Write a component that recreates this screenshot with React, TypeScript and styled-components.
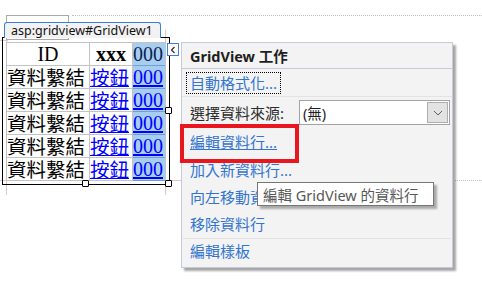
import styled, { createGlobalStyle } from "styled-components";

const GlobalStyle = createGlobalStyle`
  html, body {
    margin: 0;
    padding: 0;
    background: #ffffff;
  }
  body {
    font-family: "Noto Sans", "Noto Sans CJK TC", sans-serif;
  }
`;

const Canvas = styled.div`
  position: relative;
  width: 482px;
  height: 282px;
  overflow: hidden;
  padding-top: 37px;
  box-sizing: border-box;
  background: #ffffff;
`;

const TopGuide = styled.div`
  position: absolute;
  top: 15px;
  left: 6px;
  right: 0;
  display: flex;
  align-items: flex-start;
`;

const Placeholder = styled.div`
  width: 61px;
  height: 23px;
  border: 1px solid #a9a9a9;
  background: #ffffff;
`;

const DottedLine = styled.div`
  flex: 1;
  margin-left: 3px;
  border-top: 1px dotted #bdbdbd;
`;

const Guide = styled.div<{ $vertical?: boolean }>`
  position: absolute;
  background: #e2c6cc;
  ${(p) => (p.$vertical ? "width: 1px;" : "height: 1px;")}
`;

const GuideDots = styled.div`
  position: absolute;
  height: 0;
  border-top: 1px dotted #c4c4c4;
`;

const Stage = styled.div`
  position: relative;
  display: flex;
  align-items: flex-start;
  padding-left: 2px;
  gap: 11px;
`;

const ControlArea = styled.div`
  position: relative;
  width: 168px;
  border: 1px solid #000000;
  padding: 4px 3px 3px 3px;
  box-sizing: border-box;
`;

const Tab = styled.div`
  position: absolute;
  left: 1px;
  top: -16px;
  width: 157px;
  height: 16px;
  box-sizing: border-box;
  border: 1px solid #3b7fd8;
  border-bottom: none;
  border-radius: 3px 3px 0 0;
  background: #f2f2f2;
  color: #111111;
  font-family: "Noto Sans", sans-serif;
  font-size: 12.5px;
  line-height: 15px;
  padding-left: 6px;
  white-space: nowrap;
`;

const Grid = styled.div`
  display: grid;
  grid-template-columns: 82px 42px 32px;
  grid-auto-rows: 22px;
  gap: 1px;
  padding: 1px;
  width: 160px;
  box-sizing: border-box;
  background: #c3c3c3;
`;

const Cell = styled.div<{ $selected?: boolean; $center?: boolean }>`
  background: ${(p) => (p.$selected ? "#a7cdf1" : "#ffffff")};
  box-shadow: ${(p) => (p.$selected ? "0 1px 0 #6f9fd3" : "none")};
  display: flex;
  align-items: center;
  justify-content: ${(p) => (p.$center ? "center" : "flex-start")};
  white-space: nowrap;
  height: 22px;
`;

const SerifText = styled.span<{ $bold?: boolean; $color?: string }>`
  display: block;
  font-family: "Liberation Serif", serif;
  font-size: 20px;
  line-height: 22px;
  font-weight: ${(p) => (p.$bold ? 700 : 400)};
  color: ${(p) => p.$color || "#000000"};
`;

const CjkText = styled.span`
  display: block;
  font-family: "Noto Sans CJK TC", sans-serif;
  font-size: 19.5px;
  line-height: 22px;
  height: 22px;
  color: #000000;
`;

const CellLink = styled.span<{ $cjk?: boolean }>`
  display: block;
  font-family: ${(p) =>
    p.$cjk ? `"Noto Sans CJK TC", sans-serif` : `"Liberation Serif", serif`};
  font-size: ${(p) => (p.$cjk ? "19.5px" : "20px")};
  line-height: 22px;
  height: 22px;
  color: #0000ff;
  text-decoration: underline;
`;

const Handle = styled.div<{ $x: string; $y: string }>`
  position: absolute;
  left: ${(p) => p.$x};
  top: ${(p) => p.$y};
  width: 7px;
  height: 7px;
  margin: -4px 0 0 -4px;
  box-sizing: border-box;
  border: 1px solid #000000;
  border-radius: 1px;
  background: #ffffff;
`;

const CollapseButton = styled.div`
  position: absolute;
  left: 164px;
  top: 5px;
  width: 12px;
  height: 13px;
  box-sizing: border-box;
  border: 1px solid #3b7fd8;
  background: #ffffff;
  display: flex;
  align-items: center;
  justify-content: center;
`;

const Panel = styled.div`
  position: relative;
  margin-top: 5px;
  width: 272px;
  height: 226px;
  box-sizing: border-box;
  border: 1px solid #c8c8da;
  background: #f3f3f3;
  box-shadow: 3px 3px 2px rgba(0, 0, 0, 0.35);
  display: flex;
  flex-direction: column;
`;

const PanelHeader = styled.div`
  height: 25px;
  border-bottom: 1px solid #c8c8da;
  padding-left: 8px;
  display: flex;
  align-items: center;
  font-size: 14.5px;
  font-weight: 700;
  color: #1e1e1e;
`;

const PanelBody = styled.div`
  display: flex;
  flex-direction: column;
`;

const FocusRow = styled.div`
  height: 27px;
  display: flex;
  align-items: center;
  padding-left: 4px;
  border-bottom: 1px solid #e3e3e3;
`;

const FocusBox = styled.div`
  height: 20px;
  padding: 0 3px;
  border: 1px dotted #000000;
  display: flex;
  align-items: center;
`;

const ActionLink = styled.span<{ $underline?: boolean }>`
  font-size: 15px;
  line-height: 18px;
  color: #3274cf;
  text-decoration: ${(p) => (p.$underline ? "underline" : "none")};
  white-space: nowrap;
`;

const SourceRow = styled.div`
  height: 31px;
  display: flex;
  align-items: center;
  padding: 0 2px 0 8px;
`;

const Label = styled.span`
  font-size: 15px;
  line-height: 18px;
  color: #2b2b2b;
  white-space: nowrap;
`;

const Select = styled.div`
  margin-left: auto;
  width: 151px;
  height: 25px;
  box-sizing: border-box;
  border: 1px solid #a3a3a3;
  background: #ffffff;
  display: flex;
  align-items: center;
  justify-content: space-between;
  padding: 1px 1px 1px 3px;
  font-size: 14.5px;
  color: #1e1e1e;
`;

const SelectButton = styled.div`
  width: 21px;
  height: 21px;
  box-sizing: border-box;
  border: 1px solid #adadad;
  background: #e3e3e3;
  display: flex;
  align-items: center;
  justify-content: center;
`;

const ItemRow = styled.div<{ $h: number }>`
  height: ${(p) => p.$h}px;
  display: flex;
  align-items: center;
  padding-left: 8px;
`;

const Divider = styled.div`
  height: 1px;
  margin: 0 1px;
  background: #e2e2e2;
`;

const Highlight = styled.div`
  position: absolute;
  left: -2px;
  top: 81px;
  width: 119px;
  height: 39px;
  box-sizing: border-box;
  border: 4px solid #e8161f;
`;

const Tooltip = styled.div`
  position: absolute;
  left: 75px;
  top: 139px;
  width: 177px;
  height: 24px;
  box-sizing: border-box;
  border: 1px solid #767676;
  background: #ffffff;
  box-shadow: 3px 3px 2px rgba(0, 0, 0, 0.3);
  padding-left: 5px;
  display: flex;
  align-items: center;
  font-size: 14.5px;
  color: #575757;
  white-space: nowrap;
`;

const rows = [1, 2, 3, 4, 5];

export default function App() {
  return (
    <Canvas>
      <GlobalStyle />
      <TopGuide>
        <Placeholder />
        <DottedLine />
      </TopGuide>
      <Guide style={{ left: 0, top: 40, width: 8 }} />
      <Guide style={{ left: 0, top: 180, width: 182 }} />
      <GuideDots style={{ left: 455, top: 180, width: 27 }} />
      <Guide $vertical style={{ left: 6, top: 40, height: 155 }} />
      <Guide $vertical style={{ left: 165, top: 29, height: 166 }} />

      <Stage>
        <ControlArea>
          <Tab>asp:gridview#GridView1</Tab>
          <Grid>
            <Cell $center>
              <SerifText>ID</SerifText>
            </Cell>
            <Cell $center>
              <SerifText $bold>xxx</SerifText>
            </Cell>
            <Cell $selected>
              <SerifText $color="#0b2350">000</SerifText>
            </Cell>
            {rows.map((r) => [
              <Cell key={`a${r}`}>
                <CjkText>資料繫結</CjkText>
              </Cell>,
              <Cell key={`b${r}`}>
                <CellLink $cjk>按鈕</CellLink>
              </Cell>,
              <Cell key={`c${r}`} $selected>
                <CellLink>000</CellLink>
              </Cell>,
            ])}
          </Grid>
          <Handle $x="100%" $y="50%" />
          <Handle $x="50%" $y="100%" />
          <Handle $x="100%" $y="100%" />
          <CollapseButton>
            <svg width="6" height="8" viewBox="0 0 6 8">
              <polyline
                points="4.5,1 1.5,4 4.5,7"
                fill="none"
                stroke="#2b2b2b"
                strokeWidth="1.2"
              />
            </svg>
          </CollapseButton>
        </ControlArea>

        <Panel>
          <PanelHeader>GridView 工作</PanelHeader>
          <PanelBody>
            <FocusRow>
              <FocusBox>
                <ActionLink>自動格式化...</ActionLink>
              </FocusBox>
            </FocusRow>
            <SourceRow>
              <Label>選擇資料來源:</Label>
              <Select>
                <span>(無)</span>
                <SelectButton>
                  <svg width="10" height="6" viewBox="0 0 10 6">
                    <polyline
                      points="1,1 5,5 9,1"
                      fill="none"
                      stroke="#606060"
                      strokeWidth="1"
                    />
                  </svg>
                </SelectButton>
              </Select>
            </SourceRow>
            <ItemRow $h={28}>
              <ActionLink $underline>編輯資料行...</ActionLink>
            </ItemRow>
            <ItemRow $h={27}>
              <ActionLink>加入新資料行...</ActionLink>
            </ItemRow>
            <ItemRow $h={27}>
              <ActionLink>向左移動資料行</ActionLink>
            </ItemRow>
            <ItemRow $h={28}>
              <ActionLink>移除資料行</ActionLink>
            </ItemRow>
            <Divider />
            <ItemRow $h={24}>
              <ActionLink>編輯樣板</ActionLink>
            </ItemRow>
          </PanelBody>
          <Highlight />
          <Tooltip>編輯 GridView 的資料行</Tooltip>
        </Panel>
      </Stage>
    </Canvas>
  );
}
